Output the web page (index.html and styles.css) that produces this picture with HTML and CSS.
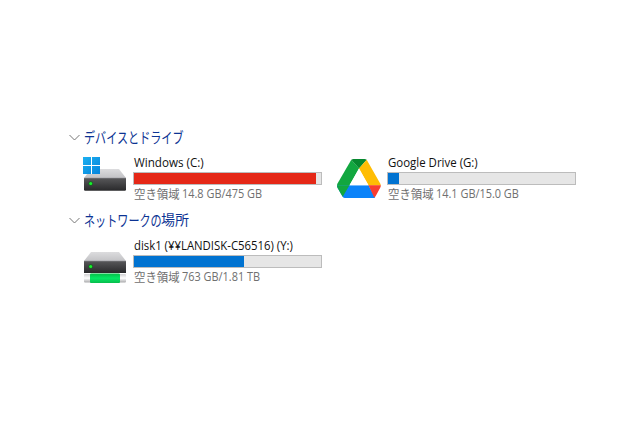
FILE: index.html
```html
<!DOCTYPE html>
<html lang="ja">
<head>
<meta charset="utf-8">
<title>PC</title>
<link rel="stylesheet" href="styles.css">
</head>
<body>
<main class="explorer">
  <section class="group">
    <h2 class="heading"><svg class="chevron" viewBox="0 0 11 7"><path d="M.5 1l5 5 5-5"/></svg><span class="kana devices">デバイスとドライブ</span></h2>
    <div class="drives">
      <article class="drive">
        <svg class="icon" viewBox="0 0 50 50">
          <defs>
            <linearGradient id="top" x2="0" y2="1"><stop stop-color="#dcdcde"/><stop offset="1" stop-color="#c2c2c5"/></linearGradient>
            <linearGradient id="front" x2="0" y2="1"><stop stop-color="#58585a"/><stop offset="1" stop-color="#29292b"/></linearGradient>
            <linearGradient id="win" gradientUnits="userSpaceOnUse" x1="6" y1="7" x2="23" y2="24"><stop stop-color="#1cb0f0"/><stop offset="1" stop-color="#0584dc"/></linearGradient>
          </defs>
          <path fill="url(#top)" d="M14 19h28l7 9H7z"/>
          <path fill="url(#front)" d="M7 28h42v11.500q0 1.200-1.200 1.200H8.200q-1.200 0-1.200-1.200z"/>
          <path stroke="#77777a" stroke-width=".7" d="M7 28.300h42"/>
          <circle cx="13.700" cy="33.500" r="2.300" fill="#176523"/><circle cx="13.700" cy="33.500" r="1.500" fill="#17f52a"/>
          <path fill="#fff" d="M6 7h17v17H6z"/>
          <path fill="url(#win)" d="M6 7h8v8H6zM15 7h8v8h-8zM6 16h8v8H6zM15 16h8v8h-8z"/>
        </svg>
        <div class="info">
          <div class="name n1">Windows (C:)</div>
          <div class="bar"><div class="fill full" style="width:182px"></div></div>
          <div class="space"><span class="label">空き領域</span><span class="amount">14.8 GB/475 GB</span></div>
        </div>
      </article>
      <article class="drive">
        <svg class="icon" viewBox="0 0 50 50">
          <path fill="#12a740" d="M20.300 9.800 6.500 33.500Q6 34.500 6 35.500L18.500 35.500 28 18.500z"/>
          <path fill="#07882f" d="M20.300 9.800Q21.300 9 22.500 9H33.500Q34.700 9 35.700 9.800L28 18.500z"/>
          <path fill="#12a740" d="M20.300 9.800 28 18.500 29.500 20 33 13.500 28 19z"/>
          <path fill="#ffbd04" d="M35.700 9.800 49.200 33.500q.6 1 .6 2H37.500L28 18.500z"/>
          <path fill="#0b83f9" d="M6 35.300h31.500l6.700 12.200q-1 .5-2.200.5H14q-1.500 0-2.500-1.500L6.500 37.800q-.5-1-.5-2.500z"/>
          <path fill="#12a740" d="M6 35.200h12.500L11.700 46.800 6.500 37.800q-.5-1-.5-2.600z"/>
          <path fill="#fff" d="M28 18.500 37.500 35.300h-19z"/>
          <path fill="#f83d31" d="M37.500 35.300h12.300q0 1.500-.6 2.500l-4.200 7.700q-.7 1.300-1.800 2z"/>
        </svg>
        <div class="info">
          <div class="name n2">Google Drive (G:)</div>
          <div class="bar"><div class="fill" style="width:11px"></div></div>
          <div class="space"><span class="label">空き領域</span><span class="amount">14.1 GB/15.0 GB</span></div>
        </div>
      </article>
    </div>
  </section>
  <section class="group">
    <h2 class="heading"><svg class="chevron" viewBox="0 0 11 7"><path d="M.5 1l5 5 5-5"/></svg><span class="kana network">ネットワークの</span><span class="place">場所</span></h2>
    <div class="drives">
      <article class="drive">
        <svg class="icon" viewBox="0 0 50 50">
          <defs>
            <linearGradient id="pipe" x2="0" y2="1"><stop stop-color="#d0d0d2"/><stop offset=".5" stop-color="#fff"/><stop offset="1" stop-color="#a8a8aa"/></linearGradient>
            <linearGradient id="green" x2="0" y2="1"><stop stop-color="#06be48"/><stop offset=".5" stop-color="#05e865"/><stop offset="1" stop-color="#08bd4c"/></linearGradient>
          </defs>
          <path fill="url(#top)" d="M14 19h28l7 9H7z"/>
          <path fill="url(#front)" d="M7 28h42v12H7z"/>
          <path stroke="#77777a" stroke-width=".7" d="M7 28.300h42"/>
          <circle cx="13.700" cy="33.500" r="2.300" fill="#176523"/><circle cx="13.700" cy="33.500" r="1.500" fill="#17f52a"/>
          <rect x="7" y="41" width="42" height="8.500" rx="1" fill="url(#pipe)"/>
          <rect x="13" y="40.500" width="30" height="9.500" rx="1" fill="url(#green)"/>
        </svg>
        <div class="info">
          <div class="name n3">disk1 (¥¥LANDISK-C56516) (Y:)</div>
          <div class="bar"><div class="fill" style="width:110px"></div></div>
          <div class="space"><span class="label">空き領域</span><span class="amount">763 GB/1.81 TB</span></div>
        </div>
      </article>
    </div>
  </section>
</main>
</body>
</html>
```
FILE: styles.css
```css
body {
  margin: 0;
  background: #fff;
  font: 12px/16px "Open Sans", "Noto Sans CJK JP", sans-serif;
  color: #111;
}
.explorer { padding: 127px 0 0 69px; }
.group { height: 83px; }
.heading {
  display: flex;
  align-items: center;
  height: 20px;
  margin: 0;
  font: 400 15px/19px "Noto Sans CJK JP", sans-serif;
  color: #0c3393;
  white-space: nowrap;
}
.chevron { width: 11px; height: 7px; margin-right: 4px; fill: none; stroke: #777; }
.kana { display: block; height: 20px; transform-origin: left; transform: scaleX(.74); }
.devices { width: 99px; }
.network { width: 77px; }
.place { height: 20px; font-size: 14px; }
.drives { display: flex; padding-left: 8px; }
.drive { display: flex; width: 254px; height: 55px; }
.icon { width: 50px; height: 50px; margin-top: 3px; }
.info { width: 189px; padding: 8px 0 0 6px; }
.name { height: 16px; padding-left: 1px; white-space: nowrap; transform-origin: left; }
.n1 { transform: scaleX(.97); }
.n2 { transform: scaleX(.955); }
.n3 { transform: scaleX(.947); }
.bar {
  box-sizing: border-box;
  width: 189px;
  height: 13px;
  margin-top: 1px;
  border: 1px solid #bcbcbc;
  background: #e6e6e6;
}
.fill { height: 11px; background: #0173d1; }
.full { background: #e52817; }
.space { display: flex; height: 17px; padding-left: 1px; line-height: 17px; color: #707070; white-space: nowrap; }
.label { width: 48px; font-family: "Noto Sans CJK JP", sans-serif; transform: scaleX(.95); transform-origin: left; }
.amount { transform: scaleX(.91); transform-origin: left; }
```
